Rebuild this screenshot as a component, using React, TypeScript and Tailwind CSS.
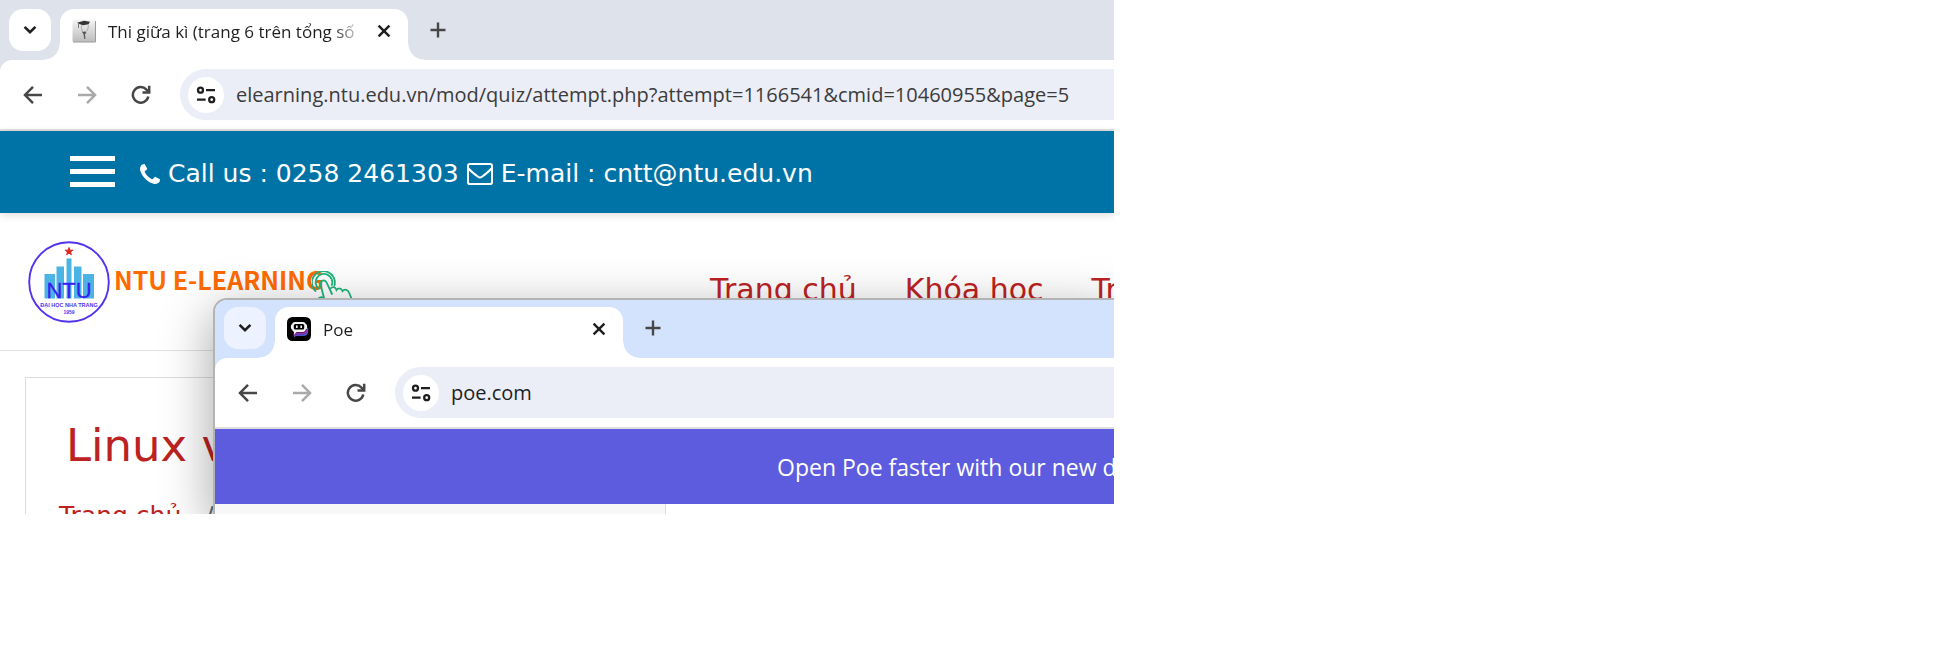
import React from "react";
import clsx from "clsx";

const DejaVu = "font-['DejaVu_Sans',sans-serif]";

function ChevronIcon() {
  return (
    <svg viewBox="0 0 14 10" className="h-[10px] w-[14px]" fill="none" stroke="#1f1f1f" strokeWidth="2.6">
      <path d="M1.6 1.8 7 7.2l5.4-5.4" />
    </svg>
  );
}

function CloseIcon() {
  return (
    <svg viewBox="0 0 14 14" className="size-[14px]" fill="none" stroke="#1f1f1f" strokeWidth="2.4">
      <path d="M1.6 1.6l10.8 10.8M12.4 1.6L1.6 12.4" />
    </svg>
  );
}

function PlusIcon() {
  return (
    <svg viewBox="0 0 16 16" className="size-[16px]" fill="none" stroke="#474747" strokeWidth="2.4">
      <path d="M8 .5v15M.5 8h15" />
    </svg>
  );
}

function ArrowIcon({ forward = false }: { forward?: boolean }) {
  return (
    <svg
      viewBox="0 0 20 20"
      className="size-5"
      fill="none"
      stroke={forward ? "#a9a9a9" : "#474747"}
      strokeWidth="2.5"
    >
      {forward ? <path d="M1 10h16.5M10 1.8l8 8.2-8 8.2" /> : <path d="M19 10H2.500M10 1.800L2 10l8 8.200" />}
    </svg>
  );
}

function ReloadIcon() {
  return (
    <svg viewBox="0 0 20 20" className="size-5" fill="none" stroke="#474747" strokeWidth="2.5">
      <path d="M17.300 11.500A7.800 7.800 0 1 1 15.500 4.600L17.600 6.800" />
      <path d="M18.200 .8v6.800h-6.700" />
    </svg>
  );
}

function TuneIcon() {
  return (
    <svg viewBox="0 0 20 18" className="h-[18px] w-[20px]" fill="none" stroke="#1f1f1f" strokeWidth="2.3">
      <circle cx="4.500" cy="4.200" r="2.500" />
      <path d="M10 4.200h9M1 13.700h8.600" />
      <circle cx="15.700" cy="13.700" r="2.500" />
    </svg>
  );
}

function PhoneIcon() {
  return (
    <svg viewBox="0 0 1408 1408" className="size-5" fill="currentColor">
      <path d="M1408 1112q0 27-10 70.500t-21 68.500q-21 50-122 106-94 51-186 51-27 0-53-3.500t-57.500-12.500-47-14.500-55.500-20.500-49-18q-98-35-175-83-127-79-264-216T152 776q-48-77-83-175-3-9-18-49t-20.500-55.500-14.500-47T3.500 392 0 339q0-92 51-186Q107 52 157 31q25-11 68.500-21T296 0q14 0 21 3 18 6 53 76 11 19 30 54t35 63.500 31 53.500q3 4 17.500 25t21.500 35.500 7 28.500q0 20-28.500 50t-62 55-62 53-28.500 46q0 9 5 22.500t8.500 20.500 14 24 11.500 19q76 137 174 235t235 174q2 1 19 11.500t24 14 20.500 8.500 22.500 5q18 0 46-28.500t53-62 55-62 50-28.500q14 0 28.500 7t35.500 21.500 25 17.500q25 15 53.500 31t63.500 35 54 30q70 35 76 53 3 7 3 21z" />
    </svg>
  );
}

function EnvelopeIcon() {
  return (
    <svg viewBox="0 0 26 22" className="h-[22px] w-[26px]" fill="none" stroke="currentColor" strokeWidth="2">
      <rect x="1" y="1" width="24" height="20" rx="1.800" />
      <path d="M1.500 5.500c2.500 3 5.500 5 8.500 7.600 1.200 1 2 1.500 3 1.500s1.800-.5 3-1.500c3-2.600 6-4.600 8.500-7.600" />
    </svg>
  );
}

function GraduateIcon() {
  return (
    <svg viewBox="0 0 24 24" className="size-6">
      <defs>
        <linearGradient id="gradBg" x1="0" y1="0" x2="0" y2="1">
          <stop offset="0" stopColor="#f4f4f4" />
          <stop offset="1" stopColor="#bcbcbc" />
        </linearGradient>
      </defs>
      <rect x=".5" y=".5" width="22.500" height="22.500" rx="1.500" fill="url(#gradBg)" />
      <path d="M1 23h22.500V2" fill="none" stroke="#9a9a9a" strokeWidth="1" />
      <path d="M5 3.700 12 1.700 18 2.800 16.500 5.200 11 6.200 8 5.200z" fill="#333" />
      <path d="M6.500 4v5" stroke="#777" strokeWidth="1" />
      <path d="M16 5.500c1 3-.5 6-3 8M9.500 6.500c-.5 3 .5 5 1.500 7" fill="none" stroke="#a0a0a0" strokeWidth=".9" />
      <path d="M10 13l3-.5 1.500 1.500-1.500 1 .3 5h-1l-.8-5z" fill="#555" />
    </svg>
  );
}

function PoeIcon() {
  return (
    <svg viewBox="0 0 24 24" className="size-6">
      <rect width="24" height="24" rx="5.500" fill="#000" />
      <path d="M7 20.500v-3.300h9c2.500 0 3.800-1.300 3.800-3.200V11h1.400v3.500c0 2.700-1.500 4.400-4.200 4.400H9z" fill="#4b55c8" />
      <path d="M7.500 19v-2.600h8.300c2.400 0 4-1.400 4-3.600" fill="none" stroke="#a02fb8" strokeWidth="1.700" />
      <path
        d="M8 5h8c1.700 0 2.600 1 2.800 2.300.9.200 1.300.8 1.300 1.700v1.800c0 .9-.4 1.500-1.300 1.700-.3 1.600-1.300 2.400-2.800 2.400H9.500L7 17.400v-2.600c-1-.3-1.700-1.100-1.800-2.300-.9-.2-1.300-.8-1.300-1.700V9c0-.9.400-1.500 1.300-1.700C5.400 5.900 6.400 5 8 5z"
        fill="#f2f2f2"
      />
      <rect x="6.800" y="7" width="10.400" height="5.600" rx="1.500" fill="#000" />
      <path d="M9.800 8.500v2.600M14.200 8.500v2.600" stroke="#f2f2f2" strokeWidth="1.700" />
    </svg>
  );
}

function NtuLogo() {
  return (
    <svg viewBox="0 0 82 82" className="size-[82px] shrink-0" role="img" aria-label="NTU">
      <circle cx="41" cy="41" r="39.800" fill="#fff" stroke="#5233ee" strokeWidth="1.900" />
      <path d="M41 6.500l.9 2.700h2.900l-2.300 1.700.9 2.800-2.400-1.700-2.400 1.700.9-2.800-2.300-1.700h2.900z" fill="#e0241c" stroke="#e0241c" />
      <path d="M16.500 33H27v24.500H16.500zM28.500 25.500H36v32h-7.500zM38.500 17.500h5v40h-5zM46 25.500h7.500v32H46zM55 33h11v24.500H55z" fill="#4bb4e4" />
      <text x="41" y="57" textAnchor="middle" fontSize="22" fill="#3a1df0" stroke="#3a1df0" strokeWidth=".3" fontFamily="Liberation Sans, sans-serif">
        NTU
      </text>
      <text x="41" y="66" textAnchor="middle" fontSize="5.500" fontWeight="700" fill="#5233ee" fontFamily="Liberation Sans, sans-serif">
        ĐẠI HỌC NHA TRANG
      </text>
      <text x="41" y="73" textAnchor="middle" fontSize="5" fontWeight="700" fill="#5233ee" fontFamily="Liberation Sans, sans-serif">
        1959
      </text>
    </svg>
  );
}

function TapIcon() {
  return (
    <svg viewBox="0 0 46 46" className="size-[46px] shrink-0" fill="none" stroke="#1fb57c" strokeWidth="1.800" strokeLinecap="round">
      <path d="M3.500 20A11.500 11.500 0 1 1 22.500 14.500M6.500 17.500A8.300 8.300 0 1 1 19.800 14" />
      <path d="M12 27L8.500 13.500c-.8-3.800 4.500-5.600 6-2L20 23" />
      <path d="M18.500 17.500c2-2.500 5-1.500 6 1.500 2-2.600 5.200-1.600 6 1 2.500-2.400 5.500-1.400 6.500 1.500L44 38M12 27c-3-1.500-6-.5-5.500 2L18 42" />
    </svg>
  );
}

interface ChromeProps {
  title: string;
  favicon: React.ReactNode;
  url: string;
  active?: boolean;
}

function BrowserChrome({ title, favicon, url, active = false }: ChromeProps) {
  return (
    <header
      className={clsx(
        "font-['Open_Sans','Noto_Sans',sans-serif]",
        active ? "bg-[#d3e3fd]" : "bg-[#dee2ea]",
      )}
    >
      <div className={clsx("flex gap-[9px] pl-[9px]", active ? "pt-[7px]" : "pt-[9px]")}>
        <button
          type="button"
          aria-label="Search tabs"
          className={clsx(
            "flex size-[42px] items-center justify-center rounded-[14px]",
            active ? "bg-[#ecf2ff]" : "bg-white",
          )}
        >
          <ChevronIcon />
        </button>
        <div className="relative flex h-[51px] w-[348px] items-start rounded-t-[14px] bg-white pl-3 pr-[17px] before:absolute before:bottom-0 before:-left-4 before:size-4 before:bg-[radial-gradient(circle_at_0_0,transparent_15px,white_16px)] after:absolute after:-right-4 after:bottom-0 after:size-4 after:bg-[radial-gradient(circle_at_100%_0,transparent_15px,white_16px)]">
          <div className="flex h-[44px] w-full items-center">
            {favicon}
            <span className="ml-3 w-[252px] overflow-hidden pt-[2px] text-[17px] leading-6 whitespace-nowrap text-[#1f1f1f] [mask-image:linear-gradient(to_right,black_225px,transparent_256px)]">
              {title}
            </span>
            <button type="button" aria-label="Close tab" className="ml-auto">
              <CloseIcon />
            </button>
          </div>
        </div>
        <button type="button" aria-label="New tab" className="ml-[13px] flex h-[42px] items-center">
          <PlusIcon />
        </button>
      </div>
      <nav className="flex h-[71px] items-center rounded-tl-[12px] border-b-2 border-[#dfdfdf] bg-white pl-[23px]">
        <button type="button" aria-label="Back">
          <ArrowIcon />
        </button>
        <button type="button" aria-label="Forward" className="ml-[34px]">
          <ArrowIcon forward />
        </button>
        <button type="button" aria-label="Reload" className="ml-[34px]">
          <ReloadIcon />
        </button>
        <div className="ml-[29px] flex h-[51px] flex-1 items-center rounded-l-full bg-[#ebeef7] pl-2">
          <button
            type="button"
            aria-label="View site information"
            className="flex size-9 shrink-0 items-center justify-center rounded-full bg-white"
          >
            <TuneIcon />
          </button>
          <input
            type="text"
            aria-label="Address bar"
            defaultValue={url}
            className={clsx(
              "ml-3 min-w-0 flex-1 bg-transparent text-[20px] leading-7 outline-none",
              active ? "text-[#1f1f1f]" : "text-[#3c3c3c]",
            )}
          />
        </div>
      </nav>
    </header>
  );
}

function SchoolPage() {
  return (
    <main className={DejaVu}>
      <div className="flex h-[82px] items-center bg-[#0073a6] pl-[70px] text-white shadow-[0_2px_8px_rgba(0,0,0,0.14)]">
        <button type="button" aria-label="Menu" className="flex w-[45px] flex-col gap-2 pb-px">
          <span className="h-[5px] bg-white" />
          <span className="h-[5px] bg-white" />
          <span className="h-[5px] bg-white" />
        </button>
        <p className="ml-[25px] flex items-center gap-2 pt-1 text-[25px] leading-8 whitespace-pre">
          <PhoneIcon />
          <span>Call us : 0258 2461303</span>
          <EnvelopeIcon />
          <span>E-mail : cntt@ntu.edu.vn</span>
        </p>
      </div>
      <div className="flex h-[138px] items-start border-b border-[#e0e0e0] pt-7 pl-7">
        <NtuLogo />
        <span className="mt-5 ml-1 font-['Noto_Sans_CJK_SC','Liberation_Sans',sans-serif] text-[25px] leading-9 font-bold whitespace-nowrap text-[#ff6a00]">
          NTU E-LEARNING
        </span>
        <span className="mt-[30px] -ml-3">
          <TapIcon />
        </span>
        <nav className="ml-auto flex w-[404px] shrink-0 gap-12 pt-[29px] text-[30px] leading-10 whitespace-nowrap text-[#bd2222]">
          <a href="#home">Trang chủ</a>
          <a href="#courses">Khóa học</a>
          <a href="#help">Trợ giúp</a>
        </nav>
      </div>
      <section className="mt-[26px] ml-[25px] h-[300px] border border-[#dcdcdc] pt-[40px] pl-[28px] whitespace-nowrap">
        <h1 className="pl-3 text-[45px] leading-[56px] text-[#bd2222]">Linux và phần mềm nguồn mở</h1>
        <div className="mt-[22px] flex gap-6 pl-[5px] text-[25px] leading-10">
          <a href="#home" className="text-[#bd2222]">Trang chủ</a>
          <span className="text-[#5c6a77]">/</span>
        </div>
      </section>
    </main>
  );
}

function PoeWindow() {
  return (
    <div className="absolute top-[298px] right-0 bottom-0 left-[213px] overflow-hidden rounded-tl-[14px] border-t-2 border-l-2 border-[#b3b3b3] bg-white shadow-[0_14px_50px_2px_rgba(0,0,0,0.34)]">
      <BrowserChrome active title="Poe" favicon={<PoeIcon />} url="poe.com" />
      <div className="h-[75px] overflow-hidden bg-[#5d5cde] pl-[562px] font-['Open_Sans','Noto_Sans',sans-serif] text-[23px] leading-[77px] whitespace-nowrap text-white">
        Open Poe faster with our new desktop app
      </div>
      <div className="h-40 w-[451px] border-r border-[#dddddd] bg-[#f7f7f7]" />
    </div>
  );
}

export default function App() {
  return (
    <div className="grid h-screen grid-cols-[minmax(0,1114fr)_minmax(0,829fr)] grid-rows-[minmax(0,514fr)_minmax(0,138fr)] bg-white">
      <div className="relative overflow-hidden bg-white">
        <BrowserChrome
          title="Thi giữa kì (trang 6 trên tổng số 10)"
          favicon={<GraduateIcon />}
          url="elearning.ntu.edu.vn/mod/quiz/attempt.php?attempt=1166541&cmid=10460955&page=5"
        />
        <SchoolPage />
        <PoeWindow />
      </div>
    </div>
  );
}
